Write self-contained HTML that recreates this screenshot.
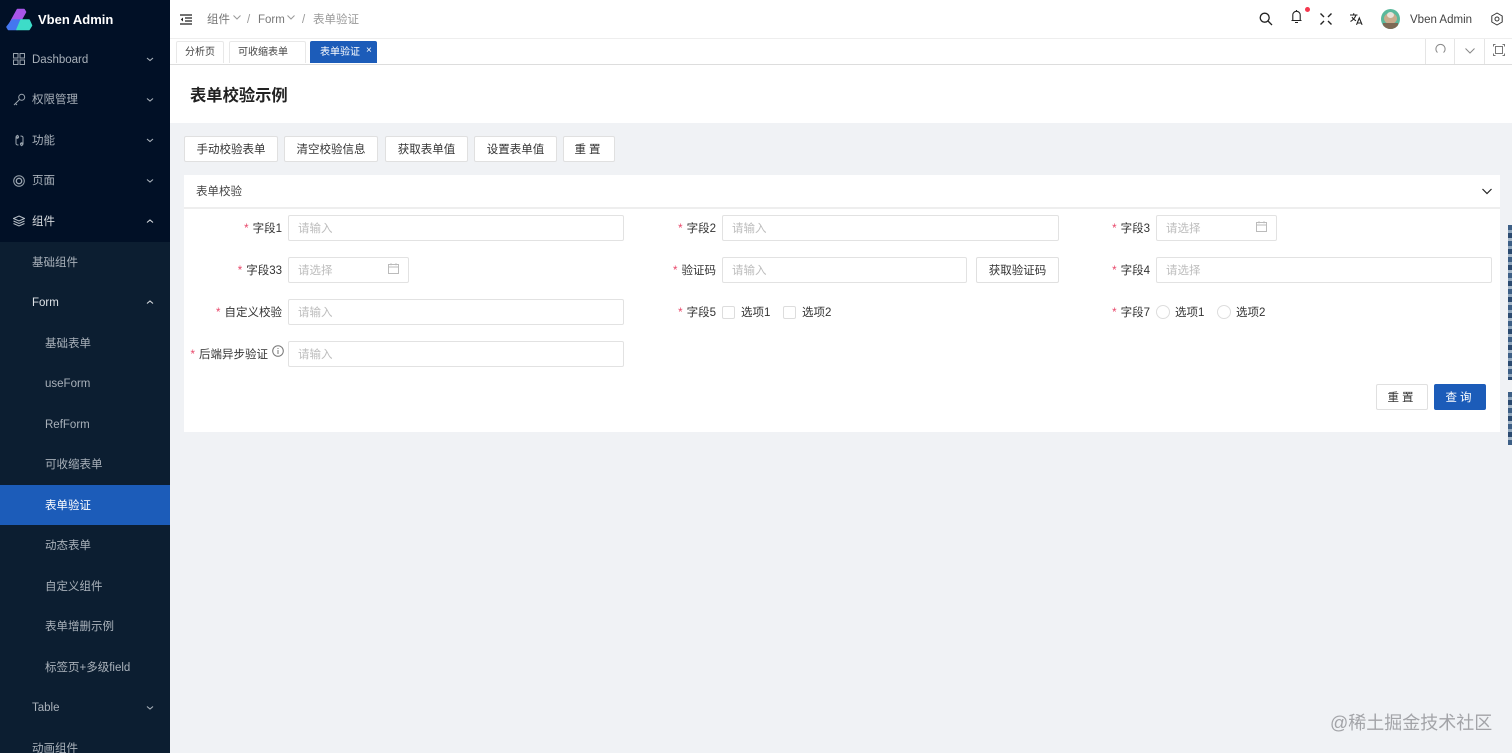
<!DOCTYPE html>
<html lang="zh"><head><meta charset="utf-8"><title>表单校验示例</title>
<style>
html,body{margin:0;padding:0}
html{width:1512px;height:753px;overflow:hidden;background:#f0f2f5}
body{width:1512px;height:753px;overflow:hidden;position:relative;background:#f0f2f5;font:11.5px/20px "Liberation Sans","Noto Sans CJK SC",sans-serif;color:#333;filter:blur(.35px)}
div,span,svg{position:absolute;box-sizing:border-box}
.t{white-space:nowrap;margin-top:1px}
.m{color:#a9b1ba;left:32px;white-space:nowrap;margin-top:1px}
.s{color:#a9b1ba;left:45px;white-space:nowrap;margin-top:1px}
.box{background:#fff;border:1px solid #e2e2e2;border-radius:2px}
.ph{color:#bdbdbd;white-space:nowrap;margin-top:1px}
.btn{background:#fff;border:1px solid #e0e0e0;border-radius:2px;text-align:center;color:#333;line-height:26px;white-space:nowrap}
.l{text-align:right;white-space:nowrap;color:#333;margin-top:1px}
.l b{color:#e8476a;font-weight:400;margin-right:4px}
.tab{background:#fff;border:1px solid #e8e8e8;border-bottom:0;border-radius:2px 2px 0 0;line-height:21px;white-space:nowrap;color:#444;font-size:10px;top:41px;height:22px}
.ck{width:13px;height:13px;border:1px solid #ddd;border-radius:2px;background:#fff;top:306px}
.rd{width:14px;height:14px;border:1px solid #ddd;border-radius:50%;background:#fff;top:305px}
</style></head><body>

<div style="left:0;top:0;width:170px;height:753px;background:#0c1e31"></div>
<div style="left:0;top:0;width:170px;height:242px;background:#011026"></div>
<div style="left:0;top:485px;width:170px;height:40px;background:#1c5cb9"></div>

<svg style="left:5px;top:7px" width="28" height="25" viewBox="0 0 28 25" stroke-linejoin="round" stroke-width="1.6">
<path d="M12.500 2.500H19L20.500 5 16 13H7.500L4 18Z" fill="#a855e8" stroke="#a855e8"/>
<path d="M7.500 13H16L12 22.500H3.500L2 20Z" fill="#4477f0" stroke="#4477f0"/>
<path d="M16 13H24L26.500 18.500 24 22.500H12Z" fill="#3ddcc8" stroke="#3ddcc8"/>
</svg>
<div class="t" style="left:38px;top:9px;color:#fff;font-weight:700;font-size:13px">Vben Admin</div>

<svg style="left:13px;top:53px" width="12" height="12" viewBox="0 0 12 12" fill="none" stroke="#9aa4ae"><rect x=".5" y=".5" width="4.5" height="4.5"/><rect x="7" y=".5" width="4.5" height="4.5"/><rect x=".5" y="7" width="4.5" height="4.5"/><rect x="7" y="7" width="4.5" height="4.5"/></svg>
<svg style="left:13px;top:93px" width="13" height="13" viewBox="0 0 13 13" fill="none" stroke="#9aa4ae"><circle cx="8.700" cy="4.300" r="3"/><path d="M6.500 6.500L1 12M2.500 10.500l1.500 1.500"/></svg>
<svg style="left:13px;top:134px" width="13" height="13" viewBox="0 0 13 13" fill="none" stroke="#9aa4ae"><path d="M3 3v6.500M10 3.500V10M3 3a1.300 1.300 0 100-.1M10 10a1.300 1.300 0 100 .1M5 1L3.500 2.500 5 4M8 9l1.500 1.500L8 12M3 9.500c0 1.300 1 1.500 2.500 1.500M10 3.500C10 2.200 9 2 7.500 2"/></svg>
<svg style="left:13px;top:174.500px" width="12" height="12" viewBox="0 0 12 12" fill="none" stroke="#9aa4ae"><circle cx="6" cy="6" r="5.300"/><circle cx="6" cy="6" r="2.700" stroke-width="1.400"/></svg>
<svg style="left:13px;top:215px" width="12" height="12" viewBox="0 0 12 12" fill="none" stroke="#b8c0c8"><path d="M6 1L11.500 3.500 6 6 .5 3.500Z"/><path d="M.5 6L6 8.500 11.500 6M.5 8.500L6 11l5.500-2.500"/></svg>

<div class="m" style="top:49px">Dashboard</div>
<div class="m" style="top:89px">权限管理</div>
<div class="m" style="top:130px">功能</div>
<div class="m" style="top:170px">页面</div>
<div class="m" style="top:211px;color:#d5d9dd">组件</div>
<div class="m" style="top:252px">基础组件</div>
<div class="m" style="top:292px;color:#dfe3e7">Form</div>
<div class="s" style="top:333px">基础表单</div>
<div class="s" style="top:373px">useForm</div>
<div class="s" style="top:414px">RefForm</div>
<div class="s" style="top:454px">可收缩表单</div>
<div class="s" style="top:495px;color:#fff">表单验证</div>
<div class="s" style="top:535px">动态表单</div>
<div class="s" style="top:576px">自定义组件</div>
<div class="s" style="top:616px">表单增删示例</div>
<div class="s" style="top:657px">标签页+多级field</div>
<div class="m" style="top:697px">Table</div>
<div class="m" style="top:738px">动画组件</div>

<svg style="left:0;top:0" width="170" height="753" fill="none" stroke="#a9b1ba" stroke-width="1.100">
<path d="M147 58l3 2.500 3-2.500M147 98.500l3 2.500 3-2.500M147 139l3 2.500 3-2.500M147 179.500l3 2.500 3-2.500M147 706.500l3 2.500 3-2.500"/>
<path stroke="#d5d9dd" d="M147 222.500l3-2.500 3 2.500M147 303.500l3-2.500 3 2.500"/>
</svg>

<div style="left:170px;top:0;width:1342px;height:38px;background:#fff"></div>
<div style="left:170px;top:38px;width:1342px;height:1px;background:#eee"></div>
<div style="left:170px;top:39px;width:1342px;height:25px;background:#fff"></div>
<div style="left:170px;top:64px;width:1342px;height:1px;background:#ddd"></div>
<div style="left:170px;top:65px;width:1342px;height:58px;background:#fff"></div>

<svg style="left:180px;top:14px" width="12" height="11" viewBox="0 0 12 11" fill="none" stroke="#222" stroke-width="1.300"><path d="M0 1h12M5 4h7M5 7h7M0 10h12"/><path d="M3 3.500L.8 5.500 3 7.500Z" fill="#222" stroke="none"/></svg>
<div class="t" style="left:207px;top:9px;color:#777">组件</div>
<svg style="left:233px;top:15px" width="8" height="5" fill="none" stroke="#999"><path d="M.5.500L4 4l3.500-3.500"/></svg>
<div class="t" style="left:247px;top:9px;color:#999">/</div>
<div class="t" style="left:258px;top:9px;color:#777">Form</div>
<svg style="left:287px;top:15px" width="8" height="5" fill="none" stroke="#999"><path d="M.5.500L4 4l3.500-3.500"/></svg>
<div class="t" style="left:302px;top:9px;color:#999">/</div>
<div class="t" style="left:313px;top:9px;color:#999">表单验证</div>

<svg style="left:1259px;top:12px" width="14" height="14" viewBox="0 0 14 14" fill="none" stroke="#222" stroke-width="1.300"><circle cx="5.700" cy="5.700" r="4.500"/><path d="M9 9l4 4"/></svg>
<svg style="left:1290px;top:9px" width="13" height="15" viewBox="0 0 13 15" fill="none" stroke="#222" stroke-width="1.100"><path d="M1.500 11.500h10M2.800 11.500V6a3.700 3.700 0 017.400 0v5.500M5 13.500h3M6.500 1v1"/></svg>
<div style="left:1305px;top:7px;width:5px;height:5px;border-radius:50%;background:#f5384f"></div>
<svg style="left:1320px;top:13px" width="12" height="12" viewBox="0 0 12 12" fill="none" stroke="#222" stroke-width="1.400"><path d="M.5.500l3.500 3.500M11.500.500L8 4M.5 11.500L4 8M11.500 11.500L8 8"/></svg>
<svg style="left:1350px;top:13px" width="13" height="12" viewBox="0 0 13 12" fill="none" stroke="#222" stroke-width="1.100"><path d="M0 2h7.500M3.700.2V2M6 2C5 5 3 7 .5 8.500M2 4c1 2 2.500 3 4 3.800"/><path d="M6.500 11.800L9.300 5l2.800 6.800M7.500 10h3.600"/></svg>
<div style="left:1381px;top:9px;width:19px;height:20px;border-radius:50%;background:#5bb99c;overflow:hidden">
<div style="left:3px;top:4px;width:13px;height:11px;border-radius:50%;background:#c9ab8c"></div>
<div style="left:6px;top:3px;width:7px;height:6px;border-radius:50%;background:#e8e2d8"></div>
<div style="left:2px;top:14px;width:15px;height:6px;background:#7d6a55"></div></div>
<div class="t" style="left:1410px;top:9px;color:#444">Vben Admin</div>
<svg style="left:1490px;top:12px" width="14" height="14" viewBox="0 0 14 14" fill="none" stroke="#333"><path d="M7 1l5.200 3v6L7 13l-5.200-3V4Z" stroke-linejoin="round"/><circle cx="7" cy="7" r="2"/></svg>

<div class="tab" style="left:176px;width:48px;text-align:center">分析页</div>
<div class="tab" style="left:229px;width:77px;padding-left:8px">可收缩表单</div>
<div class="tab" style="left:310px;width:67px;background:#1c5cb9;border-color:#1c5cb9;color:#fff;padding-left:9px">表单验证</div>
<div class="t" style="left:366px;top:40px;color:#fff;font-size:10px">×</div>
<div style="left:1425px;top:39px;width:1px;height:25px;background:#e5e5e5"></div>
<div style="left:1454px;top:39px;width:1px;height:25px;background:#e5e5e5"></div>
<div style="left:1484px;top:39px;width:1px;height:25px;background:#e5e5e5"></div>
<svg style="left:1435px;top:43px" width="11" height="11" viewBox="0 0 11 11" fill="none" stroke="#888"><path d="M2.500 9.500A4.600 4.600 0 118.500 9.500"/></svg>
<svg style="left:1465px;top:48px" width="10" height="6" fill="none" stroke="#888"><path d="M.5.500L5 5l4.500-4.500"/></svg>
<svg style="left:1493px;top:44px" width="12" height="12" viewBox="0 0 12 12" fill="none" stroke="#777"><rect x="2.500" y="2.500" width="7" height="7"/><path d="M.5 2.500V.5h2M9.500.5h2v2M.5 9.500v2h2M9.500 11.500h2v-2"/></svg>

<div class="t" style="left:190px;top:84px;line-height:22px;font-size:16.300px;font-weight:700;color:#222">表单校验示例</div>

<div class="btn" style="left:184px;top:136px;width:94px;height:26px">手动校验表单</div>
<div class="btn" style="left:284px;top:136px;width:94px;height:26px">清空校验信息</div>
<div class="btn" style="left:385px;top:136px;width:83px;height:26px">获取表单值</div>
<div class="btn" style="left:474px;top:136px;width:83px;height:26px">设置表单值</div>
<div class="btn" style="left:563px;top:136px;width:52px;height:26px;letter-spacing:3px">重置</div>

<div style="left:184px;top:175px;width:1316px;height:257px;background:#fff"></div>
<div style="left:184px;top:207px;width:1316px;height:2px;background:#eee"></div>
<div class="t" style="left:196px;top:181px;color:#444">表单校验</div>
<svg style="left:1482px;top:188px" width="10" height="7" fill="none" stroke="#222" stroke-width="1.200"><path d="M.5 1L5 5.500 9.500 1"/></svg>

<div class="l" style="left:190px;width:92px;top:218px"><b>*</b>字段1</div>
<div class="box" style="left:288px;top:215px;width:336px;height:26px"></div><div class="ph" style="left:298px;top:218px">请输入</div>
<div class="l" style="left:624px;width:92px;top:218px"><b>*</b>字段2</div>
<div class="box" style="left:722px;top:215px;width:337px;height:26px"></div><div class="ph" style="left:732px;top:218px">请输入</div>
<div class="l" style="left:1058px;width:92px;top:218px"><b>*</b>字段3</div>
<div class="box" style="left:1156px;top:215px;width:121px;height:26px"></div><div class="ph" style="left:1166px;top:218px">请选择</div>
<svg style="left:1256px;top:221px" width="11" height="11" viewBox="0 0 11 11" fill="none" stroke="#bbb"><path d="M.5 1.500h10v9H.5ZM.5 4h10M3 .2v2M8 .2v2"/></svg>

<div class="l" style="left:190px;width:92px;top:260px"><b>*</b>字段33</div>
<div class="box" style="left:288px;top:257px;width:121px;height:26px"></div><div class="ph" style="left:298px;top:260px">请选择</div>
<svg style="left:388px;top:263px" width="11" height="11" viewBox="0 0 11 11" fill="none" stroke="#bbb"><path d="M.5 1.500h10v9H.5ZM.5 4h10M3 .2v2M8 .2v2"/></svg>
<div class="l" style="left:624px;width:92px;top:260px"><b>*</b>验证码</div>
<div class="box" style="left:722px;top:257px;width:245px;height:26px"></div><div class="ph" style="left:732px;top:260px">请输入</div>
<div class="btn" style="left:976px;top:257px;width:83px;height:26px">获取验证码</div>
<div class="l" style="left:1058px;width:92px;top:260px"><b>*</b>字段4</div>
<div class="box" style="left:1156px;top:257px;width:336px;height:26px"></div><div class="ph" style="left:1166px;top:260px">请选择</div>

<div class="l" style="left:190px;width:92px;top:302px"><b>*</b>自定义校验</div>
<div class="box" style="left:288px;top:299px;width:336px;height:26px"></div><div class="ph" style="left:298px;top:302px">请输入</div>
<div class="l" style="left:624px;width:92px;top:302px"><b>*</b>字段5</div>
<div class="ck" style="left:722px"></div><div class="t" style="left:741px;top:302px">选项1</div>
<div class="ck" style="left:783px"></div><div class="t" style="left:802px;top:302px">选项2</div>
<div class="l" style="left:1058px;width:92px;top:302px"><b>*</b>字段7</div>
<div class="rd" style="left:1156px"></div><div class="t" style="left:1175px;top:302px">选项1</div>
<div class="rd" style="left:1217px"></div><div class="t" style="left:1236px;top:302px">选项2</div>

<div class="l" style="left:170px;width:98px;top:344px"><b>*</b>后端异步验证</div>
<svg style="left:272px;top:345px" width="12" height="12" viewBox="0 0 12 12" fill="none" stroke="#777"><circle cx="6" cy="6" r="5.300"/><path d="M6 5v4M6 3v1"/></svg>
<div class="box" style="left:288px;top:341px;width:336px;height:26px"></div><div class="ph" style="left:298px;top:344px">请输入</div>

<div class="btn" style="left:1376px;top:384px;width:52px;height:26px;letter-spacing:3px">重置</div>
<div class="btn" style="left:1434px;top:384px;width:52px;height:26px;letter-spacing:3px;background:#1c5cb9;border-color:#1c5cb9;color:#fff">查询</div>

<div style="left:1508px;top:225px;width:4px;height:155px;background:repeating-linear-gradient(180deg,#3d5f86 0 5px,#8fa6bd 5px 8px,#2b4a70 8px 13px,#a4b6c8 13px 16px)"></div>
<div style="left:1508px;top:392px;width:4px;height:53px;background:repeating-linear-gradient(180deg,#3d5f86 0 5px,#8fa6bd 5px 8px,#2b4a70 8px 13px,#a4b6c8 13px 16px)"></div>

<div class="t" style="left:1330px;top:710px;line-height:24px;font-size:18px;color:#a3a4a8">@稀土掘金技术社区</div>
</body></html>
